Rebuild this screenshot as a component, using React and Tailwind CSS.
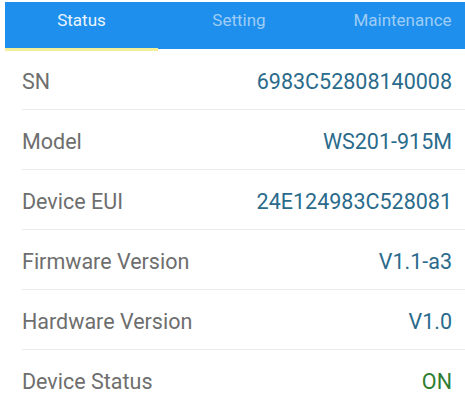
import React from "react";

const rows = [
  { label: "SN", value: "6983C52808140008" },
  { label: "Model", value: "WS201-915M" },
  { label: "Device EUI", value: "24E124983C528081" },
  { label: "Firmware Version", value: "V1.1-a3" },
  { label: "Hardware Version", value: "V1.0" },
  { label: "Device Status", value: "ON", ok: true },
];

const tabs = ["Status", "Setting", "Maintenance"];

export default function App() {
  return (
    <div className="w-[465px] h-[405px] bg-white overflow-hidden pt-[2px] pl-[5px]" style={{ fontFamily: "Roboto, 'Noto Sans', sans-serif" }}>
      {/* Tabs */}
      <div className="flex h-[47px] bg-[#1e8fec]">
        {tabs.map((t, i) => (
          <div
            key={t}
            className={`relative flex items-center justify-center pb-[10px] text-[17px] ${
              i === 0 ? "w-[153px] text-[#eaf5ff]" : i === 1 ? "w-[162px] text-[#9fcdf6]" : "flex-1 pl-[20px] text-[#9fcdf6]"
            }`}
          >
            {t}
            {i === 0 && <div className="absolute left-0 right-0 bottom-[-2px] h-[3px] bg-[#f3ef98]" />}
          </div>
        ))}
      </div>

      {/* Rows */}
      <div className="pt-[1px] ml-[17px]">
        {rows.map((r, i) => (
          <div
            key={r.label}
            className={`flex items-center justify-between h-[60px] pt-[5px] pr-[13px] text-[21.5px] ${
              i < rows.length - 1 ? "border-b border-[#ebebeb]" : ""
            }`}
          >
            <span className="text-[#6e6e6e]">{r.label}</span>
            <span className={r.ok ? "text-[#2e7d32]" : "text-[#2a6b8c]"}>{r.value}</span>
          </div>
        ))}
      </div>
    </div>
  );
}
